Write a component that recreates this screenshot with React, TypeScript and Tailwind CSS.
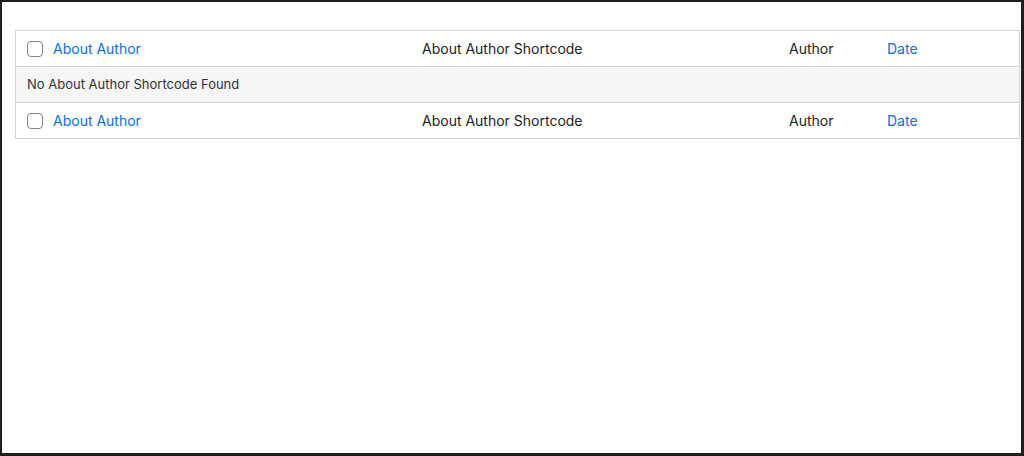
const FONT = { fontFamily: "Inter, 'Noto Sans', sans-serif" };

function Checkbox() {
  return (
    <span className="block h-4 w-4 shrink-0 rounded-[4px] border-[1.5px] border-[#7e8287] bg-white" />
  );
}

function HeadRow({ last }: { last?: boolean }) {
  return (
    <div
      className={`flex items-center text-[14px] text-[#1d2327] ${
        last ? "h-[35px]" : "h-[36px] border-b border-[#d3d4d6]"
      }`}
    >
      <div className="flex w-[406px] items-center gap-[10px] pl-[11px]">
        <Checkbox />
        <span className="text-[#0c6fe3]">About Author</span>
      </div>
      <div className="w-[367px]">About Author Shortcode</div>
      <div className="w-[98px]">Author</div>
      <div className="text-[#0c6fe3]">Date</div>
    </div>
  );
}

export default function App() {
  return (
    <div
      style={FONT}
      className="h-[456px] w-[1024px] border-t-2 border-l-2 border-r-[3px] border-b-[3px] border-[#1e1e1e] bg-white pt-[28px] pl-[13px] pr-[2px]"
    >
      <div className="w-[1005px] border border-[#d3d4d6] bg-white">
        <HeadRow />
        <div className="flex h-[36px] items-center border-b border-[#d3d4d6] bg-[#f6f6f6] pl-[11px] text-[13px] text-[#2c3338]">
          No About Author Shortcode Found
        </div>
        <HeadRow last />
      </div>
    </div>
  );
}
